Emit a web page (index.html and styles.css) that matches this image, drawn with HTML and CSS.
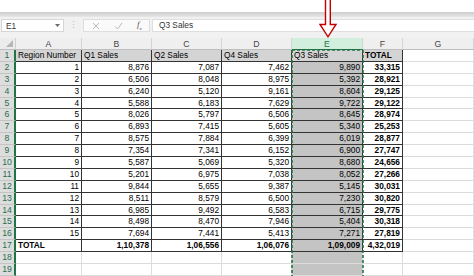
FILE: index.html
```html
<!DOCTYPE html>
<html lang="en">
<head>
  <meta charset="UTF-8" />
  <title>Sales sheet</title>
  <link rel="stylesheet" href="styles.css">
</head>
<body>
  <div class="app">
    <div class="ribbon"></div>
    <div class="ribbon-edge"></div>

    <div class="formula-bar">
      <div class="name-box">
        <span>E1</span>
        <svg class="caret" width="5" height="3" viewBox="0 0 5 3"><path d="M0 0 H5 L2.5 3 Z" fill="#6a6a6a"/></svg>
      </div>
      <div class="grip">⋮</div>
      <div class="fx-box">
        <svg class="fx-icon" width="8" height="8" viewBox="0 0 8 8"><path d="M1 1 L7 7 M7 1 L1 7" stroke="#b8b8b8" stroke-width="1" fill="none"/></svg>
        <svg class="fx-icon" width="9" height="8" viewBox="0 0 9 8"><path d="M1 4.5 L3.5 7 L8 1" stroke="#b8b8b8" stroke-width="1" fill="none"/></svg>
        <span class="fx">f<sub>x</sub></span>
      </div>
      <div class="formula-input">Q3 Sales</div>
    </div>

    <div class="sheet-wrap">
      <div id="sheet" class="sheet"></div>
      <svg class="ants" width="76" height="240" viewBox="0 0 76 240">
        <path d="M2 1 H73 M2 1 V240 M73 1 V240" stroke="#217346" stroke-width="1.6" stroke-dasharray="3 2" fill="none"/>
      </svg>
    </div>

    <svg class="arrow" width="20" height="40" viewBox="0 0 20 40">
      <path d="M6.5 -1 V24.5 H1 L9 36.8 L17 24.5 H11.3 V-1" stroke="#c00000" stroke-width="1.4" fill="#fff" stroke-linejoin="miter"/>
    </svg>
  </div>

  <script>
    const sheet = document.getElementById('sheet');
    const columns = ['A', 'B', 'C', 'D', 'E', 'F', 'G'];
    const selectedCol = 4; // column E

    const data = [
      ['Region Number', 'Q1 Sales', 'Q2 Sales', 'Q4 Sales', 'Q3 Sales', 'TOTAL'],
      ['1', '8,876', '7,087', '7,462', '9,890', '33,315'],
      ['2', '6,506', '8,048', '8,975', '5,392', '28,921'],
      ['3', '6,240', '5,120', '9,161', '8,604', '29,125'],
      ['4', '5,588', '6,183', '7,629', '9,722', '29,122'],
      ['5', '8,026', '5,797', '6,506', '8,645', '28,974'],
      ['6', '6,893', '7,415', '5,605', '5,340', '25,253'],
      ['7', '8,575', '7,884', '6,399', '6,019', '28,877'],
      ['8', '7,354', '7,341', '6,152', '6,900', '27,747'],
      ['9', '5,587', '5,069', '5,320', '8,680', '24,656'],
      ['10', '5,201', '6,975', '7,038', '8,052', '27,266'],
      ['11', '9,844', '5,655', '9,387', '5,145', '30,031'],
      ['12', '8,511', '8,579', '6,500', '7,230', '30,820'],
      ['13', '6,985', '9,492', '6,583', '6,715', '29,775'],
      ['14', '8,498', '8,470', '7,946', '5,404', '30,318'],
      ['15', '7,694', '7,441', '5,413', '7,271', '27,819'],
      ['TOTAL', '1,10,378', '1,06,556', '1,06,076', '1,09,009', '4,32,019']
    ];

    function addCell(cls, text) {
      const el = document.createElement('div');
      el.className = cls;
      if (text) el.textContent = text;
      sheet.appendChild(el);
    }

    // Column headers
    addCell('corner');
    columns.forEach((c, i) => addCell('col-head' + (i === selectedCol ? ' active' : ''), c));

    // Rows
    for (let r = 1; r <= 19; r++) {
      addCell('row-head', String(r));
      columns.forEach((c, i) => {
        const row = data[r - 1];
        const text = row && i < 6 ? row[i] : '';
        let cls = 'cell';
        if (row && i < 6) cls += ' t';
        if (r === 1 && i < 6) cls += ' head';
        if (i === selectedCol && r > 1) cls += ' sel';
        if (/^[\d,]+$/.test(text)) cls += ' num';
        if (row && i < 6 && (i === 5 || r === 17)) cls += ' b';
        addCell(cls, text);
      });
    }
  </script>
</body>
</html>
```

FILE: styles.css
```css
body {
  margin: 0;
  background: #fff;
  font-family: 'Liberation Sans', Arial, sans-serif;
  color: #000;
}

.app {
  position: relative;
  width: 474px;
  height: 276px;
  overflow: hidden;
}

.ribbon {
  height: 12px;
  background: #fff;
}

.ribbon-edge {
  height: 5px;
  background: linear-gradient(#cdcdcd, #e7e7e7);
}

.formula-bar {
  height: 21px;
  box-sizing: border-box;
  padding-top: 2px;
  background: #f1f1f1;
  display: flex;
  align-items: flex-start;
}

.name-box {
  width: 63px;
  height: 13px;
  margin-left: 1px;
  box-sizing: border-box;
  padding: 0 3px 0 4px;
  background: #fff;
  border: 1px solid #d6d6d6;
  display: flex;
  align-items: center;
  justify-content: space-between;
  font-size: 8.3px;
  color: #333;
}

.grip {
  width: 19px;
  height: 13px;
  line-height: 13px;
  text-align: center;
  font-size: 9px;
  color: #b9b9b9;
}

.fx-box {
  width: 67px;
  height: 13px;
  box-sizing: border-box;
  background: #fafafa;
  border: 1px solid #dedede;
  display: flex;
  align-items: center;
  padding-left: 8px;
  gap: 14px;
}

.fx {
  font-family: 'Liberation Serif', serif;
  font-style: italic;
  font-size: 9px;
  color: #555;
  line-height: 1;
}

.fx sub {
  font-size: 5px;
}

.formula-input {
  flex-grow: 1;
  height: 13px;
  margin-left: 2px;
  box-sizing: border-box;
  padding-left: 6px;
  background: #fff;
  border: 1px solid #dedede;
  border-right: none;
  font-size: 8.3px;
  line-height: 11px;
  color: #333;
}

.sheet-wrap {
  position: relative;
}

.sheet {
  display: grid;
  grid-template-columns: 16px 66px 70px 70px 70px 71px 40px 71px;
  grid-template-rows: 12px repeat(19, 11.9px);
  font-size: 8.3px;
}

.corner {
  background: #ececec;
  border-bottom: 1px solid #bdbdbd;
  border-right: 1px solid #cfcfcf;
  box-sizing: border-box;
  position: relative;
}

.corner::after {
  content: '';
  position: absolute;
  right: 2px;
  bottom: 2px;
  border-left: 7px solid transparent;
  border-bottom: 7px solid #b6b6b6;
}

.col-head {
  background: #efefef;
  border-right: 1px solid #d4d4d4;
  border-bottom: 1px solid #bdbdbd;
  box-sizing: border-box;
  text-align: center;
  line-height: 12px;
  font-size: 8.7px;
  color: #444;
}

.col-head.active {
  background: #d2eedc;
  color: #217346;
  border-bottom: 1px solid #217346;
}

.row-head {
  background: #dcdddc;
  border-right: 2px solid #217346;
  border-bottom: 1px solid #c4c4c4;
  box-sizing: border-box;
  text-align: center;
  line-height: 11px;
  font-size: 8.7px;
  color: #2b6e4d;
}

.cell {
  border-right: 1px solid #dcdcdc;
  border-bottom: 1px solid #dcdcdc;
  box-sizing: border-box;
  padding: 0 2px;
  line-height: 11px;
  white-space: nowrap;
  overflow: hidden;
}

.cell.t {
  border-right-color: #333;
  border-bottom-color: #333;
}

.cell.head {
  background: #d4d4d4;
}

.cell.sel {
  background: #c4c4c4;
}

.cell.num {
  text-align: right;
}

.cell.b {
  font-weight: bold;
}

.ants {
  position: absolute;
  left: 290px;
  top: 11px;
}

.arrow {
  position: absolute;
  left: 319px;
  top: 0;
}
```
